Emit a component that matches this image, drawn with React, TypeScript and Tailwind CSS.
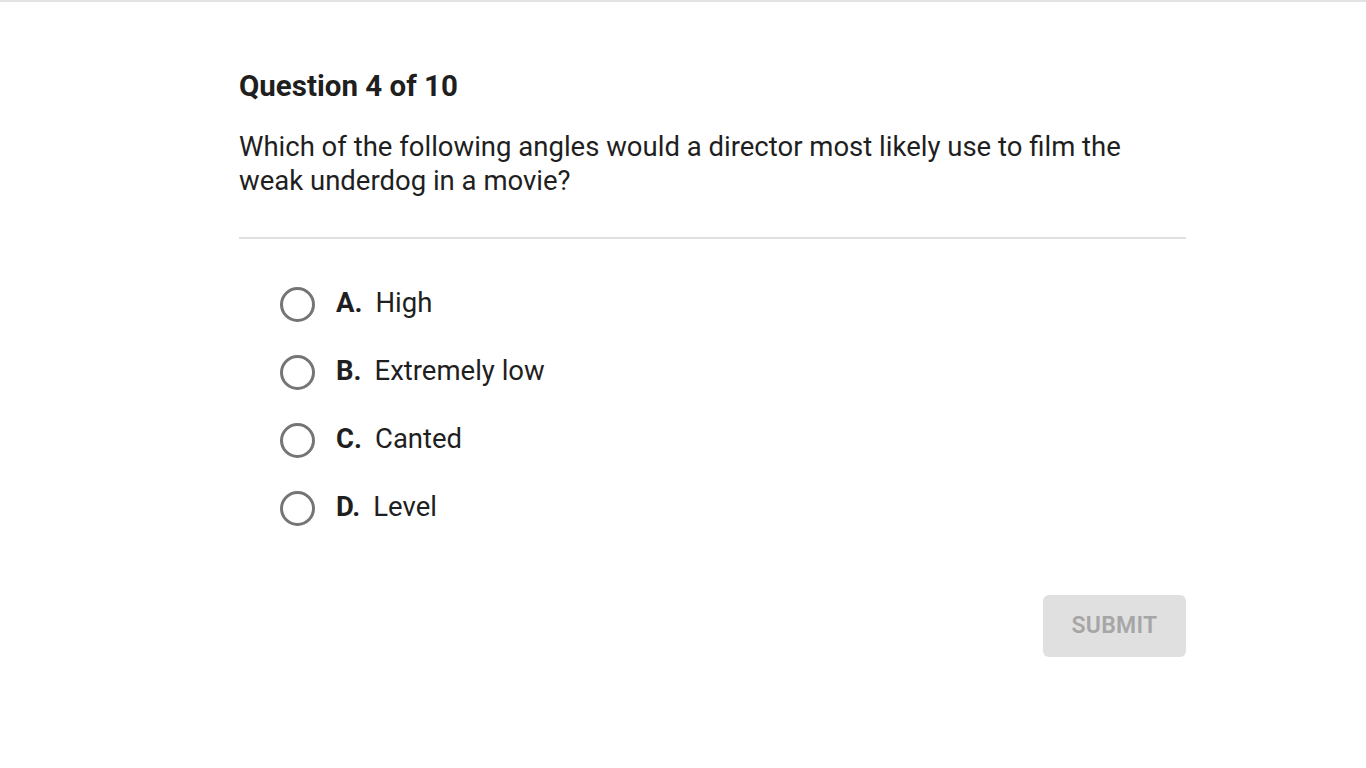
import React from "react";

// Quiz question card — static mock of a single multiple-choice question

const options = [
  { letter: "A.", text: "High" },
  { letter: "B.", text: "Extremely low" },
  { letter: "C.", text: "Canted" },
  { letter: "D.", text: "Level" },
];

function RadioCircle() {
  return (
    <span className="block h-[35px] w-[35px] shrink-0 rounded-full border-[3px] border-[#757575] bg-white" />
  );
}

export default function App() {
  return (
    <div
      className="min-h-screen bg-white text-[#1f1f1f]"
      style={{ fontFamily: "Roboto, 'Liberation Sans', sans-serif" }}
    >
      <div className="h-[2px] bg-[#e2e2e2]" />

      <div className="ml-[239px] w-[947px] pt-[66px]">
        {/* header */}
        <h1 className="text-[29.5px] font-bold leading-[36px]">
          Question 4 of 10
        </h1>

        <p className="mt-[26px] text-[27.5px] leading-[34px] pr-[40px]">
          Which of the following angles would a director most likely use to film the
          weak underdog in a movie?
        </p>

        <div className="mt-[39px] h-[2px] bg-[#e0e0e0]" />

        {/* options */}
        <div className="mt-[48px] flex flex-col gap-[33px] pl-[41px]">
          {options.map((o) => (
            <label key={o.letter} className="flex h-[35px] items-center gap-[21px] cursor-pointer">
              <RadioCircle />
              <span className="flex items-center text-[27.5px] leading-[34px] -mt-[4px]">
                <span className="font-bold">{o.letter}</span>
                <span className="ml-[13px]">{o.text}</span>
              </span>
            </label>
          ))}
        </div>

        {/* submit */}
        <div className="mt-[69px] flex justify-end">
          <button
            disabled
            className="h-[62px] w-[143px] rounded-[6px] bg-[#e0e0e0] text-[23px] font-semibold tracking-[0.3px] text-[#a6a6a6]"
          >
            SUBMIT
          </button>
        </div>
      </div>
    </div>
  );
}
